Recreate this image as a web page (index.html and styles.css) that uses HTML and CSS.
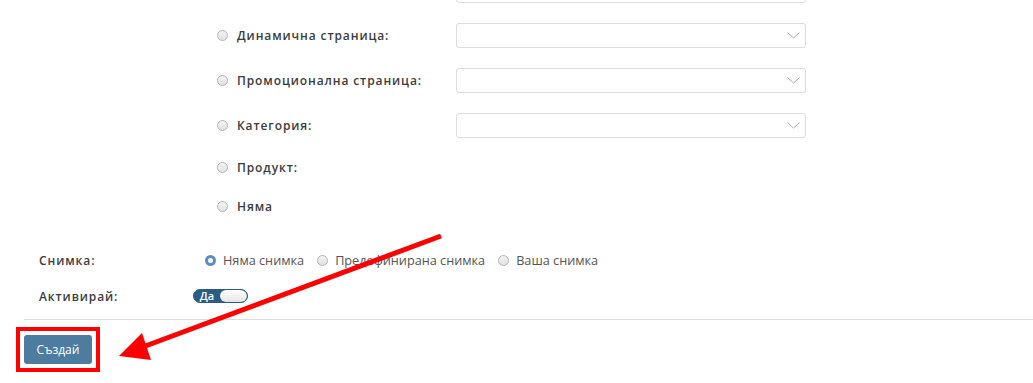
FILE: index.html
```html
<!DOCTYPE html>
<html>

<head>
    <title>Създаване на банер</title>
    <link rel="stylesheet" href="styles.css">
</head>

<body>
    <div class="page">
        <div class="targets">
            <div class="target">
                <span class="target-spacer"></span>
                <div class="select"><svg class="chevron" width="13" height="7" viewBox="0 0 13 7"><path d="M0.5 0.5 L6.5 6 L12.5 0.5" fill="none" stroke="#aaa" stroke-width="1"/></svg></div>
            </div>
            <div class="target">
                <span class="radio"></span>
                <span class="target-label">Динамична страница:</span>
                <div class="select"><svg class="chevron" width="13" height="7" viewBox="0 0 13 7"><path d="M0.5 0.5 L6.5 6 L12.5 0.5" fill="none" stroke="#aaa" stroke-width="1"/></svg></div>
            </div>
            <div class="target">
                <span class="radio"></span>
                <span class="target-label">Промоционална страница:</span>
                <div class="select"><svg class="chevron" width="13" height="7" viewBox="0 0 13 7"><path d="M0.5 0.5 L6.5 6 L12.5 0.5" fill="none" stroke="#aaa" stroke-width="1"/></svg></div>
            </div>
            <div class="target">
                <span class="radio"></span>
                <span class="target-label">Категория:</span>
                <div class="select"><svg class="chevron" width="13" height="7" viewBox="0 0 13 7"><path d="M0.5 0.5 L6.5 6 L12.5 0.5" fill="none" stroke="#aaa" stroke-width="1"/></svg></div>
            </div>
            <div class="target short">
                <span class="radio"></span>
                <span class="target-label">Продукт:</span>
            </div>
            <div class="target short">
                <span class="radio"></span>
                <span class="target-label">Няма</span>
            </div>
        </div>

        <div class="field image-field">
            <span class="field-label">Снимка:</span>
            <div class="options">
                <span class="option"><span class="radio checked"></span>Няма снимка</span>
                <span class="option"><span class="radio"></span>Предефинирана снимка</span>
                <span class="option"><span class="radio"></span>Ваша снимка</span>
            </div>
        </div>

        <div class="field active-field">
            <span class="field-label">Активирай:</span>
            <span class="toggle"><span class="toggle-on">Да</span><span class="knob"></span></span>
        </div>

        <div class="actions">
            <span class="highlight"><button class="submit">Създай</button></span>
        </div>
    </div>

    <!-- annotation arrow drawn over the page -->
    <svg class="arrow" width="1033" height="383" viewBox="0 0 1033 383">
        <line x1="441" y1="236" x2="140" y2="348" stroke="#ff0000" stroke-width="5" />
        <polygon points="119,356 142,333 151,360" fill="#ff0000" />
    </svg>
</body>

</html>
```

FILE: styles.css
```css
body {
    margin: 0;
    font-family: "Open Sans", sans-serif;
    color: #333;
    background: #fff;
}

.page {
    margin-top: -22px;
}

.targets {
    padding-left: 217px;
}

.target {
    display: flex;
    align-items: center;
    height: 24px;
    margin-bottom: 21px;
}

.target.short {
    height: 18px;
}

.target-spacer {
    width: 239px;
}

.target-label {
    width: 219px;
    font-size: 12px;
    font-weight: 600;
    letter-spacing: 0.9px;
    color: #3c3c3c;
}

.radio {
    display: inline-block;
    box-sizing: border-box;
    width: 11px;
    height: 11px;
    border-radius: 50%;
    border: 1px solid #b5b5b5;
    background: linear-gradient(#f3f3f3, #e2e2e2);
    margin-right: 9px;
    flex-shrink: 0;
}

.radio.checked {
    border: 3px solid #5b8ec4;
    background: #fff;
}

.select {
    box-sizing: border-box;
    width: 350px;
    height: 25px;
    border: 1px solid #dcdcdc;
    border-radius: 3px;
    display: flex;
    align-items: center;
    justify-content: flex-end;
    padding-right: 5px;
}

.field {
    display: flex;
    align-items: center;
    padding-left: 39px;
}

.image-field {
    margin-top: 33px;
    height: 24px;
}

.active-field {
    margin-top: 12px;
    height: 24px;
}

.field-label {
    width: 154px;
    font-size: 12px;
    font-weight: 600;
    letter-spacing: 0.9px;
    color: #3c3c3c;
}

.image-field .field-label {
    width: 166px;
}

.options {
    display: flex;
    align-items: center;
    font-size: 12.7px;
    color: #555;
}

.option {
    display: flex;
    align-items: center;
    margin-right: 13px;
}

.option .radio {
    margin-right: 7px;
}

.toggle {
    display: flex;
    align-items: center;
    box-sizing: border-box;
    width: 55px;
    height: 14px;
    border-radius: 7px;
    background: #2b5c86;
    border: 1px solid #2b5c86;
    overflow: hidden;
}

.toggle-on {
    width: 26px;
    text-align: center;
    color: #fff;
    font-size: 11px;
    font-weight: 600;
    line-height: 12px;
}

.knob {
    flex: 1;
    height: 12px;
    border-radius: 6px;
    background: linear-gradient(#ffffff, #e4e4e4);
}

.actions {
    margin-top: 11px;
    margin-left: 24px;
    border-top: 1px solid #dcdcdc;
    padding-top: 7px;
}

.highlight {
    display: inline-block;
    margin-left: -8px;
    border: 4px solid #ff0000;
    padding: 4px;
    line-height: 0;
}

.submit {
    width: 68px;
    height: 29px;
    border: none;
    border-radius: 3px;
    background: #4e7ca1;
    color: #fff;
    font-family: "Open Sans", sans-serif;
    font-size: 12px;
    padding: 0;
}

.arrow {
    position: absolute;
    top: 0;
    left: 0;
}
```
